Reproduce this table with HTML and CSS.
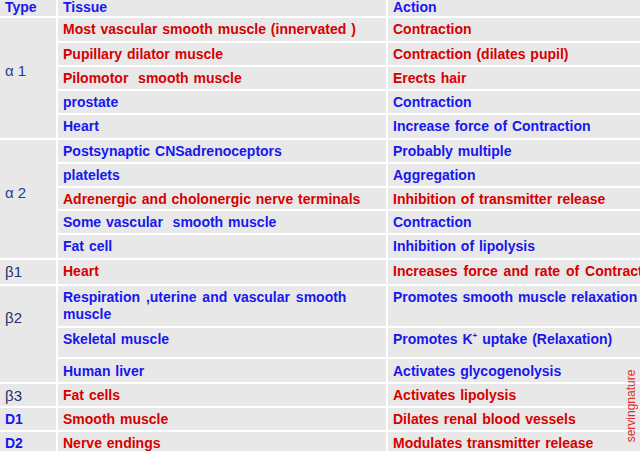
FILE: index.html
```html
<!DOCTYPE html>
<html>
<head>
<meta charset="utf-8">
<link rel="stylesheet" href="styles.css">
</head>
<body>
<div class="page">
<table class="rt">
  <colgroup><col class="c1"><col class="c2"><col class="c3"></colgroup>
  <tr class="head">
    <td class="b">Type</td><td class="b">Tissue</td><td class="b">Action</td>
  </tr>
  <tr class="r25">
    <td rowspan="5" class="type ta">α 1</td>
    <td class="r">Most vascular smooth muscle (innervated )</td><td class="r">Contraction</td>
  </tr>
  <tr class="r24"><td class="r">Pupillary dilator muscle</td><td class="r">Contraction (dilates pupil)</td></tr>
  <tr class="r24"><td class="r">Pilomotor&nbsp; smooth muscle</td><td class="r">Erects hair</td></tr>
  <tr class="r24"><td class="b">prostate</td><td class="b">Contraction</td></tr>
  <tr class="r25"><td class="b">Heart</td><td class="b">Increase force of Contraction</td></tr>
  <tr class="r24">
    <td rowspan="5" class="type ta">α 2</td>
    <td class="b">Postsynaptic CNSadrenoceptors</td><td class="b">Probably multiple</td>
  </tr>
  <tr class="r24"><td class="b">platelets</td><td class="b">Aggregation</td></tr>
  <tr class="r23"><td class="r">Adrenergic and cholonergic nerve terminals</td><td class="r">Inhibition of transmitter release</td></tr>
  <tr class="r24"><td class="b">Some vascular&nbsp; smooth muscle</td><td class="b">Contraction</td></tr>
  <tr class="r25"><td class="b">Fat cell</td><td class="b">Inhibition of lipolysis</td></tr>
  <tr class="r26">
    <td class="type tb">β1</td>
    <td class="r">Heart</td><td class="r wide">Increases force and rate of Contraction</td>
  </tr>
  <tr class="r42">
    <td rowspan="3" class="type tb tb2">β2</td>
    <td class="b wrap">Respiration ,uterine and vascular smooth muscle</td><td class="b">Promotes smooth muscle relaxation</td>
  </tr>
  <tr class="r31"><td class="b">Skeletal muscle</td><td class="b">Promotes K<sup>+</sup> uptake (Relaxation)</td></tr>
  <tr class="r25"><td class="b mid">Human liver</td><td class="b mid">Activates glycogenolysis</td></tr>
  <tr class="r24">
    <td class="type tb">β3</td>
    <td class="r">Fat cells</td><td class="r">Activates lipolysis</td>
  </tr>
  <tr class="r24">
    <td class="b">D1</td>
    <td class="r">Smooth muscle</td><td class="r">Dilates renal blood vessels</td>
  </tr>
  <tr class="r24">
    <td class="b">D2</td>
    <td class="r">Nerve endings</td><td class="r">Modulates transmitter release</td>
  </tr>
</table>
<div class="mark">servingnature</div>
</div>
</body>
</html>
```

FILE: styles.css
```css
html, body {
  margin: 0;
  padding: 0;
  width: 640px;
  height: 451px;
  overflow: hidden;
  background: #e8e8e8;
}

.page {
  position: relative;
  width: 640px;
  height: 451px;
  overflow: hidden;
}

.rt {
  border-collapse: collapse;
  border-style: hidden;
  table-layout: fixed;
  width: 640px;
  background: #e8e8e8;
  font-family: "Liberation Sans", Arial, sans-serif;
  font-size: 14px;
  font-weight: bold;
  line-height: 17px;
  word-spacing: 1px;
}

.c1 { width: 57px; }
.c2 { width: 330px; }
.c3 { width: 253px; }

.rt td {
  border: 2px solid #ffffff;
  padding: 3px 0 0 5px;
  vertical-align: top;
  white-space: nowrap;
  overflow: visible;
}

.rt td.wrap { white-space: normal; padding-right: 30px; word-spacing: 2px; }
.rt td.wide { word-spacing: 2px; }

.rt .head td {
  padding-top: 0;
  line-height: 15px;
}

.head { height: 17px; }
.r23 { height: 23px; }
.r24 { height: 24px; }
.r25 { height: 25px; }
.r26 { height: 26px; }
.r31 { height: 31px; }
.r42 { height: 42px; }

.r { color: #d60000; }
.b { color: #1717ee; }

.rt td.type {
  font-weight: normal;
  font-size: 15px;
  word-spacing: 0;
}
.ta { color: #1f3c9c; }
.rt td.ta { padding-top: 44px; }
.tb { color: #23306e; }
.rt td.tb2 { padding-top: 23px; }

.rt td.mid { padding-top: 4px; }

sup {
  font-size: 8px;
  line-height: 0;
  vertical-align: 6px;
}

.mark {
  position: absolute;
  left: 631px;
  top: 406px;
  transform: translate(-50%, -50%) rotate(-90deg);
  font-family: "Liberation Sans", Arial, sans-serif;
  font-size: 12px;
  color: #e02a2a;
  white-space: nowrap;
}
```
